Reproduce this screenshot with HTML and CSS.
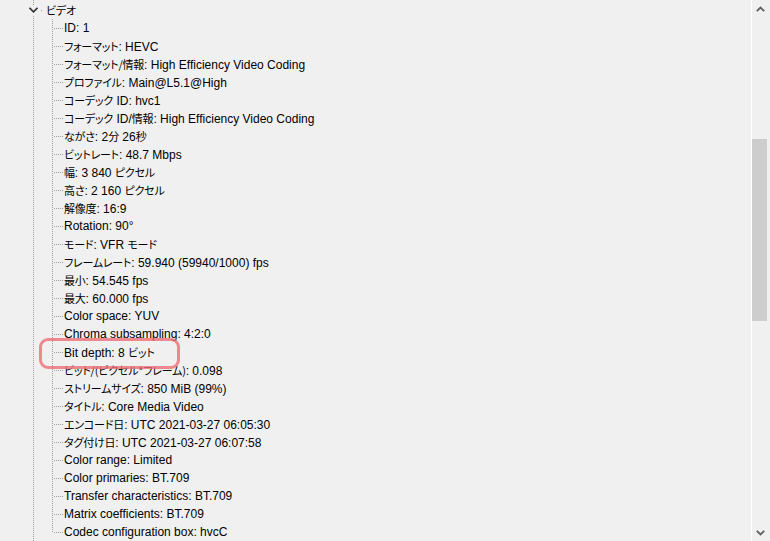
FILE: index.html
```html
<!DOCTYPE html>
<html lang="ja">
<head>
<meta charset="utf-8">
<link rel="stylesheet" href="styles.css">
</head>
<body>
<div class="app">
  <div class="tree">
    <div class="node-row root">
      <span class="chev"><svg width="9" height="6" viewBox="0 0 9 6"><path d="M0.5 0.8 L4.5 4.8 L8.5 0.8" fill="none" stroke="#333" stroke-width="1.6"/></svg></span>
      <span class="dot"></span>
      <span class="label ja">ビデオ</span>
    </div>
    <div class="children">
      <div class="row"><span class="hline"></span><span class="txt">ID: 1</span></div>
      <div class="row"><span class="hline"></span><span class="txt"><span class="ja">フォーマット</span>: HEVC</span></div>
      <div class="row"><span class="hline"></span><span class="txt"><span class="ja">フォーマット/情報</span>: High Efficiency Video Coding</span></div>
      <div class="row"><span class="hline"></span><span class="txt"><span class="ja">プロファイル</span>: Main@L5.1@High</span></div>
      <div class="row"><span class="hline"></span><span class="txt"><span class="ja">コーデック</span> ID: hvc1</span></div>
      <div class="row"><span class="hline"></span><span class="txt"><span class="ja">コーデック</span> ID/<span class="ja">情報</span>: High Efficiency Video Coding</span></div>
      <div class="row"><span class="hline"></span><span class="txt"><span class="ja">ながさ</span>: 2<span class="ja">分</span> 26<span class="ja">秒</span></span></div>
      <div class="row"><span class="hline"></span><span class="txt"><span class="ja">ビットレート</span>: 48.7 Mbps</span></div>
      <div class="row"><span class="hline"></span><span class="txt"><span class="ja">幅</span>: 3 840 <span class="ja">ピクセル</span></span></div>
      <div class="row"><span class="hline"></span><span class="txt"><span class="ja">高さ</span>: 2 160 <span class="ja">ピクセル</span></span></div>
      <div class="row"><span class="hline"></span><span class="txt"><span class="ja">解像度</span>: 16:9</span></div>
      <div class="row"><span class="hline"></span><span class="txt">Rotation: 90°</span></div>
      <div class="row"><span class="hline"></span><span class="txt"><span class="ja">モード</span>: VFR <span class="ja">モード</span></span></div>
      <div class="row"><span class="hline"></span><span class="txt"><span class="ja">フレームレート</span>: 59.940 (59940/1000) fps</span></div>
      <div class="row"><span class="hline"></span><span class="txt"><span class="ja">最小</span>: 54.545 fps</span></div>
      <div class="row"><span class="hline"></span><span class="txt"><span class="ja">最大</span>: 60.000 fps</span></div>
      <div class="row"><span class="hline"></span><span class="txt">Color space: YUV</span></div>
      <div class="row"><span class="hline"></span><span class="txt">Chroma subsampling: 4:2:0</span></div>
      <div class="row"><span class="hline"></span><span class="txt">Bit depth: 8 <span class="ja">ビット</span></span></div>
      <div class="row"><span class="hline"></span><span class="txt"><span class="ja">ビット/(ピクセル*フレーム)</span>: 0.098</span></div>
      <div class="row"><span class="hline"></span><span class="txt"><span class="ja">ストリームサイズ</span>: 850 MiB (99%)</span></div>
      <div class="row"><span class="hline"></span><span class="txt"><span class="ja">タイトル</span>: Core Media Video</span></div>
      <div class="row"><span class="hline"></span><span class="txt"><span class="ja">エンコード日</span>: UTC 2021-03-27 06:05:30</span></div>
      <div class="row"><span class="hline"></span><span class="txt"><span class="ja">タグ付け日</span>: UTC 2021-03-27 06:07:58</span></div>
      <div class="row"><span class="hline"></span><span class="txt">Color range: Limited</span></div>
      <div class="row"><span class="hline"></span><span class="txt">Color primaries: BT.709</span></div>
      <div class="row"><span class="hline"></span><span class="txt">Transfer characteristics: BT.709</span></div>
      <div class="row"><span class="hline"></span><span class="txt">Matrix coefficients: BT.709</span></div>
      <div class="row last"><span class="hline"></span><span class="txt">Codec configuration box: hvcC</span></div>
    </div>
    <div class="highlight"></div>
  </div>
  <div class="scrollbar">
    <div class="arrow up"><svg width="9" height="6" viewBox="0 0 9 6"><path d="M0.8 5.2 L4.5 1.5 L8.2 5.2" fill="none" stroke="#606060" stroke-width="1.8"/></svg></div>
    <div class="track"><div class="thumb"></div></div>
    <div class="arrow down"><svg width="9" height="6" viewBox="0 0 9 6"><path d="M0.8 0.8 L4.5 4.5 L8.2 0.8" fill="none" stroke="#606060" stroke-width="1.8"/></svg></div>
  </div>
</div>
</body>
</html>
```
FILE: styles.css
```css
html, body {
  margin: 0;
  padding: 0;
  background: #f0f0f0;
}
body {
  font-family: "Liberation Sans", "Noto Sans CJK JP", sans-serif;
  font-size: 12px;
  color: #000;
}
.ja {
  font-family: "Noto Sans CJK JP", sans-serif;
  font-size: 11px;
  letter-spacing: -0.2px;
  font-feature-settings: "palt" 1;
}
.app {
  display: flex;
  width: 770px;
  height: 541px;
  overflow: hidden;
}
.tree {
  position: relative;
  flex: 1;
  padding-top: 1px;
  background-image: linear-gradient(to bottom, #a0a0a0 50%, transparent 50%);
  background-size: 1px 2px;
  background-repeat: repeat-y;
  background-position: 33px 0;
}
.node-row {
  display: flex;
  align-items: center;
  height: 18px;
  white-space: nowrap;
}
.chev {
  display: flex;
  align-items: center;
  justify-content: center;
  width: 11px;
  height: 10px;
  margin-left: 28px;
  background: #f0f0f0;
}
.dot {
  width: 1px;
  height: 1px;
  background: #a0a0a0;
  margin-left: 2px;
  margin-right: 4px;
}
.children {
  position: relative;
}
.children::before {
  content: "";
  position: absolute;
  left: 52px;
  top: 0;
  bottom: 9px;
  width: 1px;
  background-image: linear-gradient(to bottom, #a0a0a0 50%, transparent 50%);
  background-size: 1px 2px;
}
.row {
  display: flex;
  align-items: center;
  height: 18px;
  white-space: nowrap;
}
.txt {
  white-space: pre;
}
.hline {
  width: 9px;
  height: 1px;
  margin-left: 54px;
  margin-right: 1px;
  background-image: linear-gradient(to right, #a0a0a0 50%, transparent 50%);
  background-size: 2px 1px;
}
.highlight {
  position: absolute;
  left: 39px;
  top: 338px;
  width: 141px;
  height: 31px;
  box-sizing: border-box;
  border: 3px solid rgba(238, 110, 118, 0.8);
  border-radius: 9px;
}
.scrollbar {
  display: flex;
  flex-direction: column;
  width: 18px;
  border-left: 1px solid #ffffff;
  background: #f0f0f0;
}
.arrow {
  height: 17px;
  display: flex;
  align-items: center;
  justify-content: center;
  padding-right: 2px;
}
.track {
  flex: 1;
  padding: 0 3px 0 0;
}
.thumb {
  margin-top: 122px;
  height: 182px;
  background: #cdcdcd;
}
```
